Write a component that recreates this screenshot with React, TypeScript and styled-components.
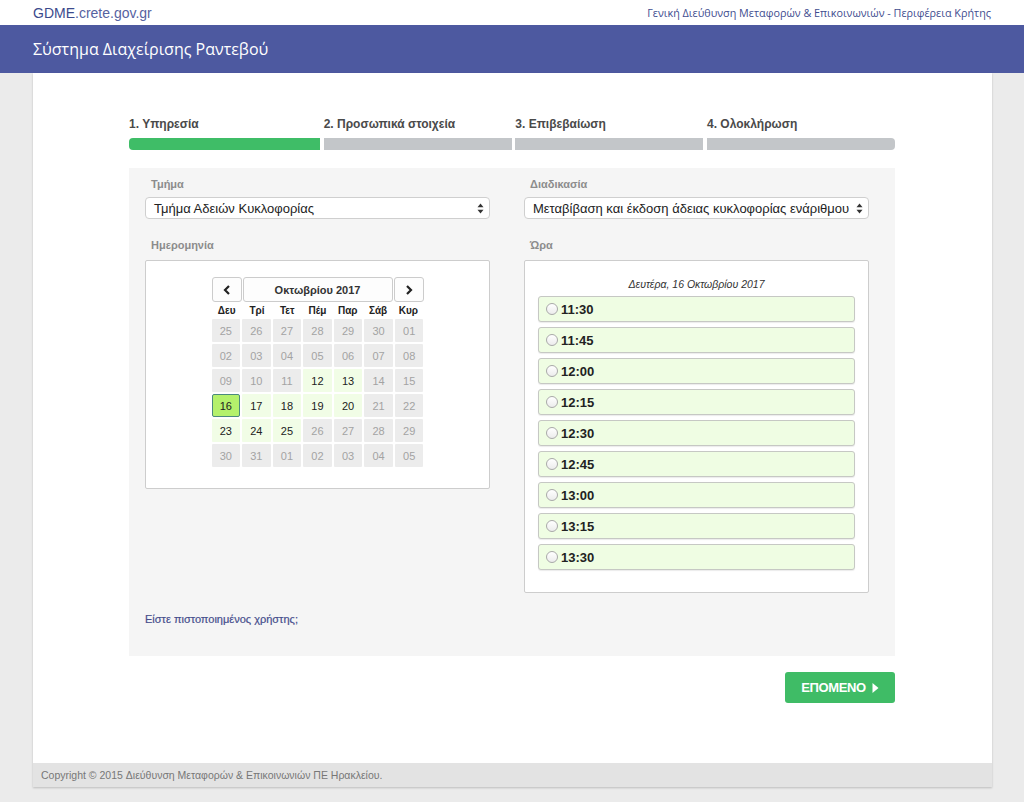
import React from "react";
import styled, { createGlobalStyle, css } from "styled-components";

const GlobalStyle = createGlobalStyle`
  html, body {
    margin: 0;
    padding: 0;
    background: #ebebeb;
    font-family: "Liberation Sans", Arial, sans-serif;
    color: #333;
  }
  * { box-sizing: border-box; }
`;

const Page = styled.div`
  min-height: 802px;
  display: flex;
  flex-direction: column;
`;

const TopBar = styled.div`
  height: 25px;
  background: #ffffff;
  display: flex;
  align-items: center;
  justify-content: space-between;
  padding: 0 33px;
`;

const Brand = styled.div`
  font-size: 14px;
  color: #56629f;
  b {
    font-weight: 400;
    color: #3c4a8c;
  }
`;

const Agency = styled.div`
  font-family: "Open Sans", "Liberation Sans", sans-serif;
  font-size: 10.8px;
  color: #3f4d8f;
`;

const Header = styled.div`
  height: 48px;
  background: #4d59a0;
  display: flex;
  align-items: center;
  padding: 0 33px;
`;

const Title = styled.h1`
  margin: 0;
  font-family: "Open Sans", "Liberation Sans", sans-serif;
  font-weight: 400;
  font-size: 16px;
  color: #ffffff;
`;

const Main = styled.div`
  width: 959px;
  margin-left: 33px;
  background: #ffffff;
  box-shadow: 0 1px 2px rgba(0, 0, 0, 0.2);
  display: flex;
  flex-direction: column;
`;

const Wizard = styled.div`
  padding: 44px 97px 60px 96px;
  display: flex;
  flex-direction: column;
`;

const Steps = styled.div`
  display: grid;
  grid-template-columns: 191px 188px 188px 188px;
  column-gap: 3px;
  justify-content: space-between;
`;

const Step = styled.div`
  display: flex;
  flex-direction: column;
  gap: 7px;
`;

const StepLabel = styled.div`
  font-size: 12px;
  font-weight: 700;
  color: #4a4a4a;
  line-height: 14px;
`;

const StepBar = styled.div<{ $active?: boolean; $first?: boolean; $last?: boolean }>`
  height: 12px;
  background: ${(p) => (p.$active ? "#3fbd67" : "#c3c6c9")};
  border-radius: ${(p) => (p.$first ? "4px 0 0 4px" : p.$last ? "0 4px 4px 0" : "0")};
`;

const Panel = styled.div`
  margin-top: 18px;
  background: #f5f5f5;
  padding: 9px 26px 31px 16px;
`;

const Columns = styled.div`
  display: grid;
  grid-template-columns: 345px 345px;
  column-gap: 34px;
  align-items: start;
`;

const Column = styled.div`
  display: flex;
  flex-direction: column;
`;

const FieldLabel = styled.div<{ $gap: number }>`
  font-size: 11px;
  font-weight: 700;
  color: #8c8c8c;
  line-height: 14px;
  padding-left: 6px;
  margin-bottom: ${(p) => p.$gap}px;
`;

const SelectBox = styled.div`
  height: 22px;
  background: #ffffff;
  border: 1px solid #cfcfcf;
  border-radius: 4px;
  display: flex;
  align-items: center;
  justify-content: space-between;
  padding: 0 5px 0 8px;
  font-size: 13px;
  color: #222;
  margin-bottom: 19px;
`;

const Card = styled.div<{ $height: number }>`
  background: #ffffff;
  border: 1px solid #cdcdcd;
  border-radius: 2px;
  height: ${(p) => p.$height}px;
`;

const CalendarCard = styled(Card)`
  display: flex;
  justify-content: center;
  padding-top: 16px;
`;

const Calendar = styled.div`
  width: 212px;
  display: flex;
  flex-direction: column;
`;

const CalNav = styled.div`
  display: grid;
  grid-template-columns: 30px 1fr 30px;
  column-gap: 1px;
  height: 25px;
`;

const NavButton = styled.div`
  border: 1px solid #cccccc;
  border-radius: 3px;
  background: #fdfdfd;
  display: flex;
  align-items: center;
  justify-content: center;
  font-size: 11px;
  font-weight: 700;
  color: #333;
`;

const DayNames = styled.div`
  display: grid;
  grid-template-columns: repeat(7, 1fr);
  height: 17px;
  align-items: center;
`;

const DayName = styled.div`
  text-align: center;
  font-size: 10px;
  font-weight: 700;
  color: #222;
`;

const Days = styled.div`
  display: grid;
  grid-template-columns: repeat(7, 1fr);
  grid-auto-rows: 23px;
  gap: 2px;
`;

const Day = styled.div<{ $state: "off" | "on" | "sel" }>`
  display: flex;
  align-items: center;
  justify-content: center;
  font-size: 11px;
  border-radius: 1px;
  ${(p) =>
    p.$state === "off" &&
    css`
      background: #ececec;
      color: #a3a3a3;
    `}
  ${(p) =>
    p.$state === "on" &&
    css`
      background: #f1fde6;
      color: #222;
    `}
  ${(p) =>
    p.$state === "sel" &&
    css`
      background: #b4f16c;
      color: #222;
      border: 1px solid #4b8a7e;
      border-radius: 2px;
    `}
`;

const TimeCard = styled(Card)`
  padding: 16px 13px 0 13px;
  display: flex;
  flex-direction: column;
  gap: 5px;
`;

const TimeDate = styled.div`
  text-align: center;
  font-size: 10.5px;
  font-style: italic;
  color: #333;
  line-height: 14px;
`;

const Slot = styled.div`
  height: 26px;
  background: #effde3;
  border: 1px solid #c6c8c4;
  border-radius: 3px;
  box-shadow: 0 1px 1px rgba(0, 0, 0, 0.08);
  display: flex;
  align-items: center;
  padding-left: 7px;
  gap: 3px;
  font-size: 13px;
  font-weight: 700;
  color: #222;
`;

const Radio = styled.span`
  width: 12px;
  height: 12px;
  border-radius: 50%;
  border: 1px solid #a9a9a9;
  background: linear-gradient(#ffffff, #ececec);
`;

const CertLink = styled.a`
  display: block;
  margin-top: 20px;
  font-size: 11px;
  color: #454d8c;
  text-decoration: none;
  -webkit-text-stroke: 0.2px #454d8c;
`;

const Actions = styled.div`
  display: flex;
  justify-content: flex-end;
  margin-top: 16px;
`;

const NextButton = styled.button`
  width: 110px;
  height: 31px;
  border: none;
  border-radius: 3px;
  background: #3fbc66;
  color: #ffffff;
  font-family: "Liberation Sans", Arial, sans-serif;
  font-size: 13px;
  font-weight: 700;
  letter-spacing: -0.4px;
  display: flex;
  align-items: center;
  justify-content: center;
  gap: 6px;
  padding: 0;
`;

const Footer = styled.div`
  height: 24px;
  background: #e3e3e3;
  display: flex;
  align-items: center;
  padding-left: 8px;
  font-size: 10.5px;
  color: #777;
`;

const SortArrows = () => (
  <svg width="7" height="11" viewBox="0 0 7 11">
    <path d="M3.5 0.5 L6.5 4.3 L0.5 4.3 Z" fill="#333" />
    <path d="M3.5 10.5 L6.5 6.7 L0.5 6.7 Z" fill="#333" />
  </svg>
);

const Chevron = ({ dir }: { dir: "left" | "right" }) => (
  <svg width="8" height="10" viewBox="0 0 8 10">
    <path
      d={dir === "left" ? "M6 1 L2 5 L6 9" : "M2 1 L6 5 L2 9"}
      stroke="#222"
      strokeWidth="2.2"
      fill="none"
    />
  </svg>
);

const dayNames = ["Δευ", "Τρί", "Τετ", "Πέμ", "Παρ", "Σάβ", "Κυρ"];

const days: { d: string; s: "off" | "on" | "sel" }[] = [
  ...["25", "26", "27", "28", "29", "30", "01", "02", "03", "04", "05", "06", "07", "08", "09", "10", "11"].map(
    (d) => ({ d, s: "off" as const })
  ),
  { d: "12", s: "on" },
  { d: "13", s: "on" },
  { d: "14", s: "off" },
  { d: "15", s: "off" },
  { d: "16", s: "sel" },
  { d: "17", s: "on" },
  { d: "18", s: "on" },
  { d: "19", s: "on" },
  { d: "20", s: "on" },
  { d: "21", s: "off" },
  { d: "22", s: "off" },
  { d: "23", s: "on" },
  { d: "24", s: "on" },
  { d: "25", s: "on" },
  ...["26", "27", "28", "29", "30", "31", "01", "02", "03", "04", "05"].map((d) => ({ d, s: "off" as const })),
];

const slots = ["11:30", "11:45", "12:00", "12:15", "12:30", "12:45", "13:00", "13:15", "13:30"];

const steps = ["1. Υπηρεσία", "2. Προσωπικά στοιχεία", "3. Επιβεβαίωση", "4. Ολοκλήρωση"];

const App: React.FC = () => {
  return (
    <Page>
      <GlobalStyle />
      <TopBar>
        <Brand>
          <b>GDME</b>.crete.gov.gr
        </Brand>
        <Agency>Γενική Διεύθυνση Μεταφορών &amp; Επικοινωνιών - Περιφέρεια Κρήτης</Agency>
      </TopBar>
      <Header>
        <Title>Σύστημα Διαχείρισης Ραντεβού</Title>
      </Header>

      <Main>
        <Wizard>
          <Steps>
            {steps.map((s, i) => (
              <Step key={s}>
                <StepLabel>{s}</StepLabel>
                <StepBar $active={i === 0} $first={i === 0} $last={i === steps.length - 1} />
              </Step>
            ))}
          </Steps>

          <Panel>
            <Columns>
              <Column>
                <FieldLabel $gap={6}>Τμήμα</FieldLabel>
                <SelectBox>
                  <span>Τμήμα Αδειών Κυκλοφορίας</span>
                  <SortArrows />
                </SelectBox>
                <FieldLabel $gap={8}>Ημερομηνία</FieldLabel>
                <CalendarCard $height={229}>
                  <Calendar>
                    <CalNav>
                      <NavButton>
                        <Chevron dir="left" />
                      </NavButton>
                      <NavButton>Οκτωβρίου 2017</NavButton>
                      <NavButton>
                        <Chevron dir="right" />
                      </NavButton>
                    </CalNav>
                    <DayNames>
                      {dayNames.map((n) => (
                        <DayName key={n}>{n}</DayName>
                      ))}
                    </DayNames>
                    <Days>
                      {days.map((d, i) => (
                        <Day key={i} $state={d.s}>
                          {d.d}
                        </Day>
                      ))}
                    </Days>
                  </Calendar>
                </CalendarCard>
              </Column>

              <Column>
                <FieldLabel $gap={6}>Διαδικασία</FieldLabel>
                <SelectBox>
                  <span>Μεταβίβαση και έκδοση άδειας κυκλοφορίας ενάριθμου</span>
                  <SortArrows />
                </SelectBox>
                <FieldLabel $gap={8}>Ώρα</FieldLabel>
                <TimeCard $height={333}>
                  <TimeDate>Δευτέρα, 16 Οκτωβρίου 2017</TimeDate>
                  {slots.map((t) => (
                    <Slot key={t}>
                      <Radio />
                      {t}
                    </Slot>
                  ))}
                </TimeCard>
              </Column>
            </Columns>
            <CertLink href="#">Είστε πιστοποιημένος χρήστης;</CertLink>
          </Panel>

          <Actions>
            <NextButton>
              ΕΠΟΜΕΝΟ
              <svg width="7" height="10" viewBox="0 0 7 10">
                <path d="M0.5 0 L6.5 5 L0.5 10 Z" fill="#fff" />
              </svg>
            </NextButton>
          </Actions>
        </Wizard>
        <Footer>Copyright © 2015 Διεύθυνση Μεταφορών &amp; Επικοινωνιών ΠΕ Ηρακλείου.</Footer>
      </Main>
    </Page>
  );
};

export default App;
